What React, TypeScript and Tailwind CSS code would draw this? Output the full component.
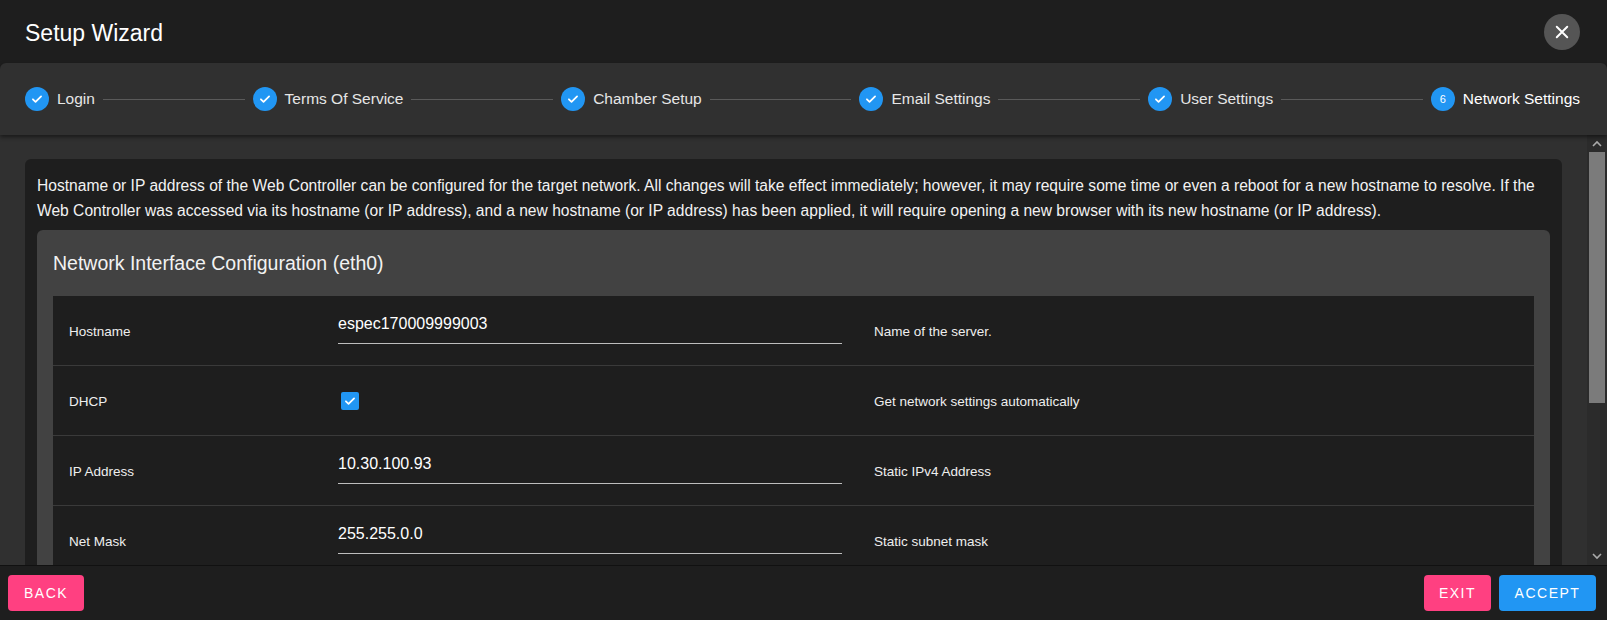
import React from 'react';

const steps = ['Login', 'Terms Of Service', 'Chamber Setup', 'Email Settings', 'User Settings'];

const rows = [
  { label: 'Hostname', value: 'espec170009999003', desc: 'Name of the server.' },
  { label: 'DHCP', check: true, desc: 'Get network settings automatically' },
  { label: 'IP Address', value: '10.30.100.93', desc: 'Static IPv4 Address' },
  { label: 'Net Mask', value: '255.255.0.0', desc: 'Static subnet mask' },
];

const Check = () => (
  <svg width="14" height="14" viewBox="0 0 24 24" fill="none" stroke="white" strokeWidth="3" strokeLinecap="round" strokeLinejoin="round">
    <path d="M5 12.5l4.5 4.5L19 7.5" />
  </svg>
);

const App: React.FC = () => {
  return (
    <div className="h-[620px] w-full bg-[#1e1e1e] flex flex-col overflow-hidden text-white" style={{ fontFamily: '"Liberation Sans", Arial, sans-serif' }}>
      <div className="h-[63px] flex items-center justify-between pl-[25px] pr-[27px] shrink-0">
        <h1 className="text-[23px] pt-[3px]">Setup Wizard</h1>
        <button className="w-[36px] h-[36px] rounded-full bg-[#555555] flex items-center justify-center">
          <svg width="18" height="18" viewBox="0 0 24 24" stroke="white" strokeWidth="2.6" strokeLinecap="round">
            <path d="M5 5l14 14M19 5L5 19" />
          </svg>
        </button>
      </div>

      <div className="h-[72px] shrink-0 bg-[#303030] rounded-t-md shadow-[0_2px_4px_rgba(0,0,0,0.5)] flex items-center pl-[25px] pr-[27px] relative z-10">
        {steps.map((s) => (
          <React.Fragment key={s}>
            <div className="flex items-center gap-[8px] shrink-0">
              <span className="w-[24px] h-[24px] rounded-full bg-[#2196f3] flex items-center justify-center"><Check /></span>
              <span className="text-[15.5px] text-[#e6e6e6]">{s}</span>
            </div>
            <div className="flex-1 h-px bg-[#5a5a5a] mx-[8px]" />
          </React.Fragment>
        ))}
        <div className="flex items-center gap-[8px] shrink-0">
          <span className="w-[24px] h-[24px] rounded-full bg-[#2196f3] flex items-center justify-center text-[11px]">6</span>
          <span className="text-[15.5px] text-white">Network Settings</span>
        </div>
      </div>

      <div className="flex-1 min-h-0 flex bg-[#303030]">
        <div className="flex-1 min-h-0 overflow-hidden pl-[25px] pr-[25px] pt-[24px]">
          <div className="bg-[#1e1e1e] rounded-t-md px-[12px] pt-[14px]">
            <p className="text-[15.6px] leading-[25px] text-[#f2f2f2]">
              Hostname or IP address of the Web Controller can be configured for the target network. All changes will take effect immediately; however, it may require some time or even a reboot for a new hostname to resolve. If the Web Controller was accessed via its hostname (or IP address), and a new hostname (or IP address) has been applied, it will require opening a new browser with its new hostname (or IP address).
            </p>
            <div className="mt-[7px] bg-[#424242] rounded-t-md px-[16px] pt-[19px]">
              <h2 className="text-[19.5px] text-[#f2f2f2] leading-[28px] mb-[19px]">Network Interface Configuration (eth0)</h2>
              <div className="bg-[#1e1e1e]">
                {rows.map((r) => (
                  <div key={r.label} className="h-[70px] grid grid-cols-[285px_504px_1fr] items-center border-b border-[#3a3a3a] text-[13.5px]">
                    <span className="pl-[16px] text-[#eeeeee] pt-[4px]">{r.label}</span>
                    {r.check ? (
                      <span className="ml-[3px] w-[18px] h-[18px] rounded-[2px] bg-[#2196f3] flex items-center justify-center"><Check /></span>
                    ) : (
                      <div className="border-b border-[#bdbdbd] pb-[7px] -mt-[6px] text-[16px] text-white">{r.value}</div>
                    )}
                    <span className="pl-[32px] text-[#eeeeee] pt-[4px]">{r.desc}</span>
                  </div>
                ))}
              </div>
            </div>
          </div>
        </div>
        <div className="w-[20px] bg-[#2b2b2b] flex flex-col items-center">
          <span className="h-[17px] flex items-center justify-center">
            <svg width="10" height="7" viewBox="0 0 10 7"><path d="M1 6l4-4 4 4" stroke="#aaa" strokeWidth="1.6" fill="none" /></svg>
          </span>
          <div className="w-[16px] flex-1 bg-[#7b7b7b] mb-[145px]" />
          <span className="h-[17px] flex items-center justify-center mt-auto">
            <svg width="10" height="7" viewBox="0 0 10 7"><path d="M1 1l4 4 4-4" stroke="#aaa" strokeWidth="1.6" fill="none" /></svg>
          </span>
        </div>
      </div>

      <div className="h-[55px] shrink-0 bg-[#1e1e1e] border-t border-[#111] flex items-center justify-between pl-[8px] pr-[11px]">
        <button className="h-[36px] px-[16px] rounded bg-[#ff4081] text-[14px] tracking-[1.5px]">BACK</button>
        <div className="flex gap-[8px]">
          <button className="h-[36px] w-[67px] rounded bg-[#ff4081] text-[14px] tracking-[1.5px]">EXIT</button>
          <button className="h-[36px] w-[97px] rounded bg-[#2196f3] text-[14px] tracking-[1.5px]">ACCEPT</button>
        </div>
      </div>
    </div>
  );
};

export default App;
